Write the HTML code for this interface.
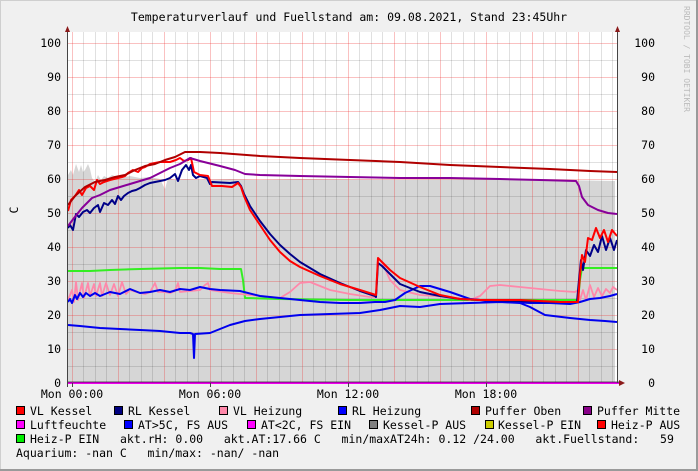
<!DOCTYPE html>
<html><head><meta charset="utf-8"><style>
html,body{margin:0;padding:0;background:#f0f0f0}
svg{display:block}
text{font-family:"DejaVu Sans Mono","Liberation Mono",monospace;font-size:11.5px;fill:#000}
</style></head><body>
<svg width="698" height="471" viewBox="0 0 698 471" xmlns="http://www.w3.org/2000/svg">
<rect x="0" y="0" width="698" height="471" fill="#f0f0f0"/>
<rect x="0.5" y="0.5" width="696" height="469" fill="none" stroke="#cfcfcf"/>
<line x1="0" y1="470" x2="698" y2="470" stroke="#9a9a9a" stroke-width="2"/>
<line x1="697" y1="0" x2="697" y2="471" stroke="#9a9a9a" stroke-width="2"/>
<text x="349" y="21" text-anchor="middle" font-size="13">Temperaturverlauf und Fuellstand am: 09.08.2021, Stand 23:45Uhr</text>
<text transform="translate(684,6) rotate(90)" style="font-size:8px;fill:#bbb">RRDTOOL / TOBI OETIKER</text>
<rect x="68" y="32" width="549" height="351" fill="#fff"/>
<!-- gray fill level -->
<polygon fill="#d6d6d6" points="68,383 68,175 71,170 73,175 76,164 79,172 81,165 83,172 85,170 88,164 90,169 92,178 95,182 98,175 101,180 104,176 108,178 112,175 120,178 130,176 140,178 150,177 160,179 165,189 168,178 175,180 185,179 200,180 230,179 260,180 300,179 400,180 500,179 615,181 615,383"/>
<g stroke="#e0c8c8" stroke-width="1" fill="none" opacity="0.9">
</g>
<!-- minor grid -->
<g stroke="#000" stroke-opacity="0.12" stroke-width="1">
<path d="M68,366.5H617M68,332.5H617M68,298.5H617M68,264.5H617M68,230.5H617M68,196.5H617M68,162.5H617M68,128.5H617M68,94.5H617M68,60.5H617"/>
<path id="vm" d="M83.5,32V383M95.5,32V383M106.5,32V383M129.5,32V383M141.5,32V383M152.5,32V383M175.5,32V383M187.5,32V383M198.5,32V383M221.5,32V383M233.5,32V383M244.5,32V383M267.5,32V383M279.5,32V383M290.5,32V383M313.5,32V383M325.5,32V383M336.5,32V383M359.5,32V383M371.5,32V383M382.5,32V383M405.5,32V383M417.5,32V383M428.5,32V383M451.5,32V383M463.5,32V383M474.5,32V383M497.5,32V383M509.5,32V383M520.5,32V383M543.5,32V383M555.5,32V383M566.5,32V383M589.5,32V383M601.5,32V383M612.5,32V383"/>
</g>
<!-- major grid -->
<g stroke="#e33" stroke-opacity="0.3" stroke-width="1">
<path d="M68,349.5H617M68,315.5H617M68,281.5H617M68,247.5H617M68,213.5H617M68,179.5H617M68,145.5H617M68,111.5H617M68,77.5H617M68,43.5H617"/>
<path d="M72.5,32V383M118.5,32V383M164.5,32V383M210.5,32V383M256.5,32V383M302.5,32V383M348.5,32V383M394.5,32V383M440.5,32V383M486.5,32V383M532.5,32V383M578.5,32V383"/>
</g>
<!-- curves -->
<g fill="none" stroke-width="2" stroke-linejoin="round">
<polyline stroke="#33ee22" points="68,271 90,271 110,270 140,269 180,268 200,268 220,269 241,269 243,280 245,298 280,299 350,300 450,300 570,300 578,300 580,280 582,268 617,268"/>
<polyline stroke="#ff88aa" stroke-width="1.8" points="68,300 72,290 74,302 76,282 78,300 82,283 84,298 88,283 90,296 94,284 96,296 100,283 102,296 106,283 110,295 114,284 118,296 122,282 126,294 130,290 140,293 145,294 150,292 155,283 158,292 165,292 170,293 175,291 178,283 180,292 190,291 200,290 205,285 208,283 210,290 230,293 250,295 280,298 290,292 300,283 310,282 330,290 350,294 370,297 376,297 378,258 382,262 390,280 400,290 420,295 450,297 470,300 480,296 490,286 500,285 520,287 560,291 575,292 578,290 580,300 583,290 586,300 590,285 594,297 598,288 602,296 606,289 610,293 613,287 617,290"/>
<polyline stroke="#0000ee" points="68,302 70,299 72,303 75,295 77,299 80,293 83,297 86,293 90,296 95,293 100,296 110,292 120,294 130,289 140,293 150,292 160,290 170,292 180,289 190,290 200,287 210,289 220,290 240,291 260,296 280,298 300,300 320,302 340,303 360,303 375,302 385,302 395,300 405,293 420,286 430,286 450,292 470,299 490,301 510,302 530,303 550,303 570,304 580,302 590,299 600,298 610,296 617,294"/>
<polyline stroke="#0000ee" points="68,325 80,326 100,328 120,329 140,330 160,331 180,333 190,333 193,334 194,358 195,334 210,333 220,329 230,325 245,321 260,319 280,317 300,315 330,314 360,313 380,310 400,306 420,307 440,304 470,303 500,302 520,303 530,307 545,315 570,318 590,320 605,321 617,322"/>
<polyline stroke="#000088" points="68,228 70,225 73,230 76,214 79,217 83,212 87,210 90,213 94,208 98,205 100,212 104,203 108,205 112,200 115,204 118,196 121,200 124,196 128,193 132,191 136,190 140,188 145,185 150,183 155,182 160,181 165,180 170,178 175,174 178,181 182,170 186,165 189,170 191,165 193,175 196,178 200,176 207,178 210,184 212,182 230,183 238,182 241,186 244,194 250,206 260,221 270,234 280,245 290,254 300,262 320,274 340,283 360,291 375,296 376,297 378,263 382,266 392,276 400,284 420,292 440,296 460,299 480,300 520,301 560,302 577,302 579,280 581,260 583,270 586,250 590,256 594,245 598,252 602,236 606,250 610,238 614,250 617,240"/>
<polyline stroke="#ff0000" points="68,211 71,200 75,196 79,190 82,195 86,188 90,186 94,190 97,180 100,184 104,182 110,180 118,178 122,177 125,176 128,173 133,170 138,172 142,168 145,167 150,164 160,162 170,162 176,160 180,158 184,161 188,160 191,158 194,172 200,175 208,176 212,186 222,186 232,187 238,183 241,187 244,196 250,210 260,225 270,240 280,252 290,261 300,267 320,276 340,284 360,290 376,295 378,258 382,262 390,270 400,278 420,287 440,295 460,299 480,300 520,300 560,302 578,302 580,275 582,255 585,262 588,238 592,240 596,228 600,238 604,230 608,242 612,230 617,236"/>
<polyline stroke="#b00000" points="68,205 75,196 85,187 95,182 105,180 115,177 125,175 135,170 145,166 155,164 165,160 175,157 185,152 200,152 220,153 260,156 300,158 350,160 400,162 450,165 500,167 550,169 590,171 617,172"/>
<polyline stroke="#880099" points="68,226 74,218 82,208 92,198 100,195 110,190 120,187 130,184 140,181 150,178 160,173 170,168 180,164 190,158 200,161 220,166 235,170 245,174 260,175 300,176 350,177 400,178 450,178 500,179 540,180 576,181 579,186 582,197 588,205 598,210 608,213 617,214"/>
</g>
<line x1="68" y1="383" x2="620" y2="383" stroke="#ee00ee" stroke-width="2"/>
<line x1="68" y1="382" x2="620" y2="382" stroke="#000" stroke-width="1" stroke-opacity="0.6"/>
<!-- axes -->
<line x1="67.5" y1="30" x2="67.5" y2="387" stroke="#444"/>
<line x1="617.5" y1="30" x2="617.5" y2="383" stroke="#444"/>
<polygon points="65,32 70,32 67.5,26" fill="#8b1a1a"/>
<polygon points="615,32 620,32 617.5,26" fill="#8b1a1a"/>
<polygon points="619,380 619,386 625,383" fill="#8b1a1a"/>
<g stroke="#444">
<path d="M72.5,383v4M210.5,383v4M348.5,383v4M486.5,383v4"/>
</g>
<!-- y labels -->
<g text-anchor="end">
<text x="61" y="47">100</text><text x="61" y="81">90</text><text x="61" y="115">80</text><text x="61" y="149">70</text><text x="61" y="183">60</text><text x="61" y="217">50</text><text x="61" y="251">40</text><text x="61" y="285">30</text><text x="61" y="319">20</text><text x="61" y="353">10</text><text x="61" y="387">0</text>
<text x="655" y="47">100</text><text x="655" y="81">90</text><text x="655" y="115">80</text><text x="655" y="149">70</text><text x="655" y="183">60</text><text x="655" y="217">50</text><text x="655" y="251">40</text><text x="655" y="285">30</text><text x="655" y="319">20</text><text x="655" y="353">10</text><text x="655" y="387">0</text>
</g>
<text transform="translate(18,210) rotate(-90)" text-anchor="middle">C</text>
<g text-anchor="middle">
<text x="72" y="398">Mon 00:00</text><text x="210" y="398">Mon 06:00</text><text x="348" y="398">Mon 12:00</text><text x="486" y="398">Mon 18:00</text>
</g>
<!-- legend -->
<g stroke="#000" stroke-width="1">
<rect x="16.5" y="406.5" width="8" height="8" fill="#ff0000"/>
<rect x="114.5" y="406.5" width="8" height="8" fill="#000080"/>
<rect x="219.5" y="406.5" width="8" height="8" fill="#ff88aa"/>
<rect x="338.5" y="406.5" width="8" height="8" fill="#0000ff"/>
<rect x="471.5" y="406.5" width="8" height="8" fill="#b00000"/>
<rect x="583.5" y="406.5" width="8" height="8" fill="#880088"/>
<rect x="16.5" y="420.5" width="8" height="8" fill="#ff00ff"/>
<rect x="124.5" y="420.5" width="8" height="8" fill="#0000ff"/>
<rect x="247.5" y="420.5" width="8" height="8" fill="#ff00ff"/>
<rect x="369.5" y="420.5" width="8" height="8" fill="#808080"/>
<rect x="485.5" y="420.5" width="8" height="8" fill="#cccc00"/>
<rect x="597.5" y="420.5" width="8" height="8" fill="#ff0000"/>
<rect x="16.5" y="434.5" width="8" height="8" fill="#00ee00"/>
</g>
<text x="30" y="415" xml:space="preserve">VL Kessel</text>
<text x="128" y="415">RL Kessel</text>
<text x="233" y="415">VL Heizung</text>
<text x="352" y="415">RL Heizung</text>
<text x="485" y="415">Puffer Oben</text>
<text x="597" y="415">Puffer Mitte</text>
<text x="30" y="429">Luftfeuchte</text>
<text x="138" y="429">AT&gt;5C, FS AUS</text>
<text x="261" y="429">AT&lt;2C, FS EIN</text>
<text x="383" y="429">Kessel-P AUS</text>
<text x="498" y="429">Kessel-P EIN</text>
<text x="611" y="429">Heiz-P AUS</text>
<text x="30" y="443" xml:space="preserve">Heiz-P EIN   akt.rH: 0.00   akt.AT:17.66 C   min/maxAT24h: 0.12 /24.00   akt.Fuellstand:   59</text>
<text x="16" y="457" xml:space="preserve">Aquarium: -nan C   min/max: -nan/ -nan</text>
</svg>
</body></html>
